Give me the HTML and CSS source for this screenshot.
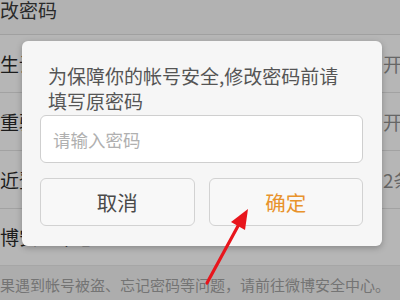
FILE: index.html
```html
<!DOCTYPE html>
<html lang="zh-CN">
<head>
<meta charset="utf-8">
<title>修改密码</title>
<link rel="stylesheet" href="styles.css">
</head>
<body>
<div class="page">
  <div class="header">修改密码</div>
  <div class="row"><span class="label">陌生设备登录提醒</span><span class="value">开启</span></div>
  <div class="row"><span class="label">双重验证</span><span class="value">开启</span></div>
  <div class="row"><span class="label">最近登录记录</span><span class="value">2条</span></div>
  <div class="row last"><span class="label">微博安全中心</span><span class="value"></span></div>
  <div class="footer">如果遇到帐号被盗、忘记密码等问题，请前往微博安全中心。</div>
</div>

<div class="dialog">
  <p class="msg">为保障你的帐号安全,修改密码前请填写原密码</p>
  <div class="input">请输入密码</div>
  <div class="buttons">
    <div class="btn cancel">取消</div>
    <div class="btn ok">确定</div>
  </div>
</div>

<svg class="arrow" width="400" height="300" viewBox="0 0 400 300">
  <line x1="207" y1="283" x2="238" y2="226" stroke="#e8151c" stroke-width="3.2" stroke-linecap="round"/>
  <polygon points="248,209 231,222 245,230" fill="#e8151c"/>
</svg>
</body>
</html>
```
FILE: styles.css
```css
html, body {
  margin: 0;
  padding: 0;
  width: 400px;
  height: 300px;
  overflow: hidden;
  background: #adadad;
  font-family: "Noto Sans CJK SC", "Noto Sans", sans-serif;
}

.page {
  width: 440px;
  display: flex;
  flex-direction: column;
}

.header {
  height: 34px;
  line-height: 20px;
  font-size: 19px;
  color: #2a2a2a;
  text-indent: -19px;
  background: #b2b2b2;
  border-bottom: 1px solid #a0a0a0;
}

.row {
  height: 57px;
  display: grid;
  grid-template-columns: 383px 1fr;
  align-items: center;
  background: #b6b6b6;
  border-bottom: 1px solid #a2a2a2;
  font-size: 19px;
}

.row.last {
  height: 54px;
  padding-bottom: 2px;
  border-bottom: 1px solid #a6a6a6;
}

.label {
  color: #1c1c1c;
  text-indent: -19px;
  white-space: nowrap;
}

.value {
  color: #666;
  white-space: nowrap;
}

.footer {
  height: 36px;
  display: flex;
  align-items: center;
  font-size: 15px;
  color: #747474;
  text-indent: -15px;
  white-space: nowrap;
  background: #adadad;
}

.dialog {
  position: absolute;
  left: 22px;
  top: 41px;
  width: 360px;
  height: 205px;
  box-sizing: border-box;
  padding: 22px 19px 20px 18px;
  background: #f6f6f6;
  border-radius: 6px;
  box-shadow: 0 2px 6px rgba(0, 0, 0, 0.25);
  display: flex;
  flex-direction: column;
}

.msg {
  margin: 0 0 2px;
  padding: 0 16px 0 8px;
  font-size: 19px;
  line-height: 25px;
  color: #555;
}

.input {
  height: 48px;
  box-sizing: border-box;
  background: #fff;
  border: 1px solid #cfcfcf;
  border-radius: 6px;
  padding-left: 12px;
  display: flex;
  align-items: center;
  font-size: 17.5px;
  color: #b0b0b0;
}

.buttons {
  margin-top: 15px;
  display: grid;
  grid-template-columns: 1fr 1fr;
  gap: 14px;
}

.btn {
  height: 48px;
  box-sizing: border-box;
  border: 1px solid #d2d2d2;
  border-radius: 6px;
  background: #f8f8f8;
  display: flex;
  align-items: center;
  justify-content: center;
  font-size: 20.5px;
}

.cancel { color: #4a4a4a; }
.ok { color: #e8932c; }

.arrow {
  position: absolute;
  left: 0;
  top: 0;
}
```
